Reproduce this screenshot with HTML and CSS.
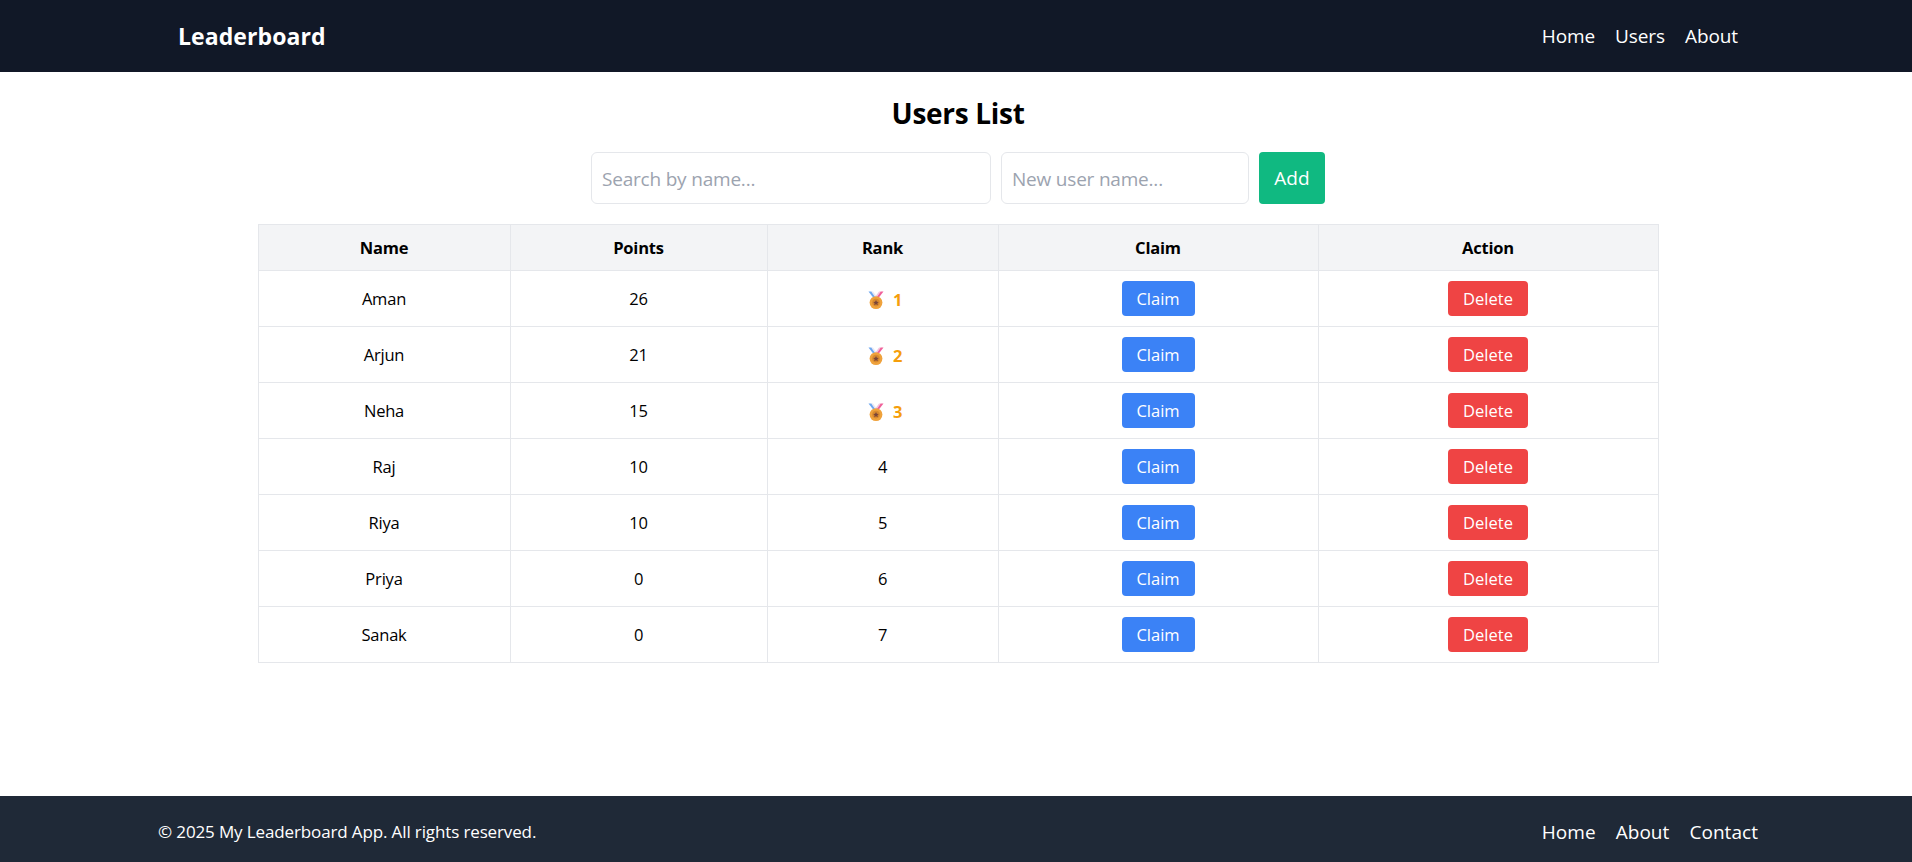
FILE: index.html
```html
<!DOCTYPE html>
<html lang="en">
<head>
<meta charset="utf-8">
<title>Leaderboard</title>
<link rel="stylesheet" href="styles.css">
</head>
<body>
<svg class="defs" width="0" height="0" aria-hidden="true">
  <symbol id="medal" viewBox="0 0 16 18">
    <path d="M0.5 0.5H3.5L8.5 7H5.5Z" fill="#6ea8f0"/>
    <path d="M3.2 0.5H5L9 6H7Z" fill="#e8e8f4"/>
    <path d="M15.5 0.5H12.5L7.5 7H10.5Z" fill="#f0609a"/>
    <path d="M12.8 0.5H11L7 6H9Z" fill="#f4c4dc"/>
    <circle cx="8" cy="11.6" r="6.4" fill="#efa23c"/>
    <circle cx="8" cy="11.6" r="3.8" fill="#d98a2e"/>
    <path d="M8 9L8.9 10.8L10.8 11L9.4 12.3L9.8 14.2L8 13.3L6.2 14.2L6.6 12.3L5.2 11L7.1 10.8Z" fill="#7b4638"/>
  </symbol>
</svg>
<div class="page">
  <header class="topbar">
    <div class="topbar-inner">
      <span class="brand">Leaderboard</span>
      <nav class="nav">
        <a href="#">Home</a>
        <a href="#">Users</a>
        <a href="#">About</a>
      </nav>
    </div>
  </header>
  <main class="main">
    <h1 class="title">Users List</h1>
    <form class="controls">
      <input class="field field-search" type="text" placeholder="Search by name...">
      <input class="field field-new" type="text" placeholder="New user name...">
      <button class="add" type="button">Add</button>
    </form>
    <table class="board">
      <colgroup>
        <col class="c1"><col class="c2"><col class="c3"><col class="c4"><col class="c5">
      </colgroup>
      <thead>
        <tr><th>Name</th><th>Points</th><th>Rank</th><th>Claim</th><th>Action</th></tr>
      </thead>
      <tbody>
        <tr><td>Aman</td><td>26</td><td><span class="rank"><svg class="medal"><use href="#medal"/></svg><b>1</b></span></td><td><button class="btn claim" type="button">Claim</button></td><td><button class="btn del" type="button">Delete</button></td></tr>
        <tr><td>Arjun</td><td>21</td><td><span class="rank"><svg class="medal"><use href="#medal"/></svg><b>2</b></span></td><td><button class="btn claim" type="button">Claim</button></td><td><button class="btn del" type="button">Delete</button></td></tr>
        <tr><td>Neha</td><td>15</td><td><span class="rank"><svg class="medal"><use href="#medal"/></svg><b>3</b></span></td><td><button class="btn claim" type="button">Claim</button></td><td><button class="btn del" type="button">Delete</button></td></tr>
        <tr><td>Raj</td><td>10</td><td>4</td><td><button class="btn claim" type="button">Claim</button></td><td><button class="btn del" type="button">Delete</button></td></tr>
        <tr><td>Riya</td><td>10</td><td>5</td><td><button class="btn claim" type="button">Claim</button></td><td><button class="btn del" type="button">Delete</button></td></tr>
        <tr><td>Priya</td><td>0</td><td>6</td><td><button class="btn claim" type="button">Claim</button></td><td><button class="btn del" type="button">Delete</button></td></tr>
        <tr><td>Sanak</td><td>0</td><td>7</td><td><button class="btn claim" type="button">Claim</button></td><td><button class="btn del" type="button">Delete</button></td></tr>
      </tbody>
    </table>
  </main>
  <footer class="foot">
    <div class="foot-inner">
      <span class="copy">© 2025 My Leaderboard App. All rights reserved.</span>
      <nav class="foot-nav">
        <a href="#">Home</a>
        <a href="#">About</a>
        <a href="#">Contact</a>
      </nav>
    </div>
  </footer>
</div>
</body>
</html>
```
FILE: styles.css
```css
* { box-sizing: border-box; }
html { overflow: hidden; }
html, body { margin: 0; padding: 0; }
body { font-family: "Open Sans", "Noto Sans", sans-serif; color: #000; background: #fff; letter-spacing: -0.2px; }
.defs { position: absolute; }
.page { width: 1916px; height: 862px; display: flex; flex-direction: column; }
a { color: inherit; text-decoration: none; }

.topbar { height: 72px; flex: none; background: #111827; color: #fff; display: flex; align-items: center; }
.topbar-inner { width: 1600px; margin: 0 auto; padding: 0 20px; display: flex; justify-content: space-between; align-items: center; }
.brand { font-size: 23px; font-weight: 700; letter-spacing: 0.08px; }
.nav { display: flex; gap: 20px; font-size: 19px; letter-spacing: -0.1px; }

.main { flex: 1; display: flex; flex-direction: column; align-items: center; }
.title { margin: 20px 0 0; height: 40px; font-size: 28px; line-height: 42px; font-weight: 700; letter-spacing: -0.3px; }
.controls { margin-top: 20px; display: flex; gap: 10px; height: 52px; }
.field { height: 52px; padding: 2px 10px 0; border: 1px solid #e5e7eb; border-radius: 6px; background: #fff; font: inherit; font-size: 19px; letter-spacing: -0.2px; color: #000; outline: none; }
.field::placeholder { color: #9ca3af; opacity: 1; }
.field-search { width: 400px; }
.field-new { width: 248px; }
.add { width: 66px; height: 52px; padding: 0; border: 0; border-radius: 4px; background: #10b981; color: #fff; font: inherit; font-size: 19px; }

.board { margin-top: 20px; width: 1400px; table-layout: fixed; border-collapse: collapse; font-size: 16.5px; text-align: center; }
.c1 { width: 252px; }
.c2 { width: 257px; }
.c3 { width: 231px; }
.c4 { width: 320px; }
.c5 { width: 340px; }
.board th, .board td { border: 1px solid #e5e7eb; padding: 0; }
.board th { height: 46px; background: #f3f4f6; font-weight: 700; }
.board td { height: 56px; }
.rank { display: inline-flex; align-items: center; gap: 9px; vertical-align: middle; padding-left: 5px; }
.rank b { color: #f59e0b; font-weight: 700; }
.medal { width: 16px; height: 18px; display: block; }
.btn { height: 35px; padding: 0; border: 0; border-radius: 4px; color: #fff; font: inherit; vertical-align: middle; }
.claim { width: 73px; background: #3b82f6; }
.del { width: 80px; background: #ef4444; }

.foot { height: 66px; flex: none; padding-top: 5px; background: #1f2937; color: #fff; display: flex; align-items: center; }
.foot-inner { width: 1600px; margin: 0 auto; display: flex; justify-content: space-between; align-items: center; }
.copy { font-size: 17px; letter-spacing: -0.13px; }
.foot-nav { display: flex; gap: 20px; font-size: 19px; letter-spacing: 0.05px; }
```
